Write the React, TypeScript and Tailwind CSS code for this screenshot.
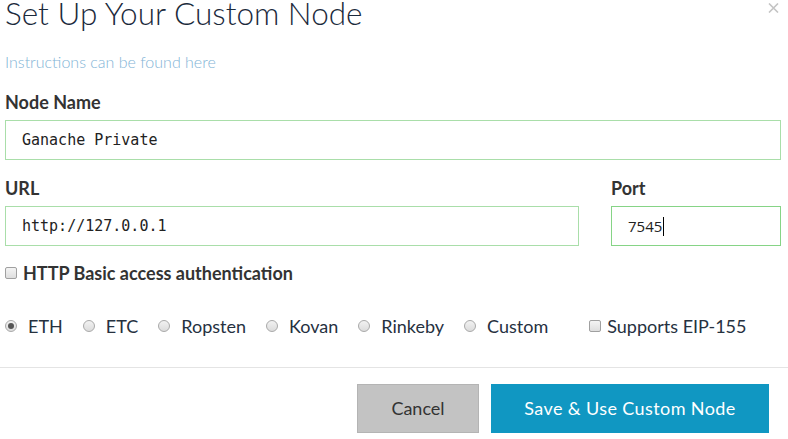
import React from "react";

const lato = { fontFamily: "Lato, 'Open Sans', sans-serif" };

function Radio({ checked }: { checked?: boolean }) {
  return (
    <span className="flex h-[12px] w-[12px] shrink-0 items-center justify-center rounded-full border border-[#a9a9a9] bg-gradient-to-b from-[#f2f2f2] to-[#dcdcdc]">
      {checked && <span className="h-[6px] w-[6px] rounded-full bg-[#555]" />}
    </span>
  );
}

function Checkbox() {
  return (
    <span className="block h-[12px] w-[12px] shrink-0 rounded-[2px] border border-[#a0a0a0] bg-gradient-to-b from-[#f4f4f4] to-[#dedede]" />
  );
}

function Field({ children, className }: { children: React.ReactNode; className?: string }) {
  return (
    <div
      className={
        "flex h-[40px] items-center border border-[#a9dea9] bg-white pl-[16px] text-[15px] text-[#222] " +
        (className || "")
      }
      style={{ fontFamily: "'DejaVu Sans Mono', 'Liberation Mono', monospace" }}
    >
      {children}
    </div>
  );
}

const networks = ["ETH", "ETC", "Ropsten", "Kovan", "Rinkeby", "Custom"];

export default function App() {
  return (
    <div className="h-[439px] w-[788px] overflow-hidden bg-white" style={lato}>
      <div className="pl-[5px] pr-[7px]">
        <div className="flex items-start justify-between">
          <h1 className="font-['Lato_Light',Lato,sans-serif] text-[31.5px] font-light leading-[26px] text-[#1b2a3c]">
            Set Up Your Custom Node
          </h1>
          <svg className="mr-[2px] mt-[3px]" width="11" height="10" viewBox="0 0 11 10">
            <path d="M1 0.5 L10 9.5 M10 0.5 L1 9.5" stroke="#c4c4c4" strokeWidth="1.6" />
          </svg>
        </div>

        <p className="mt-[26px] font-['Lato_Light',Lato,sans-serif] text-[16px] font-light leading-[20px] text-[#82b4d6]">
          Instructions can be found here
        </p>

        <label className="mt-[20px] block text-[18px] font-bold leading-[20px] text-[#333]">Node Name</label>
        <Field className="mt-[8px]">Ganache Private</Field>

        <div className="mt-[18px] flex gap-[32px]">
          <div className="w-[574px]">
            <label className="block text-[18px] font-bold leading-[20px] text-[#333]">URL</label>
            <Field className="mt-[8px]">http://127.0.0.1</Field>
          </div>
          <div className="flex-1">
            <label className="block text-[18px] font-bold leading-[20px] text-[#333]">Port</label>
            <div
              className="mt-[8px] flex h-[40px] items-center border border-[#86d486] bg-white pl-[16px] text-[15px] text-[#222]"
              style={{ fontFamily: "'Open Sans', sans-serif" }}
            >
              <span>7545</span>
              <span className="ml-[1px] h-[19px] w-[1px] bg-black" />
            </div>
          </div>
        </div>

        <div className="mt-[17px] flex items-center gap-[6px] text-[18px] font-bold leading-[20px] text-[#333]">
          <Checkbox />
          <span>HTTP Basic access authentication</span>
        </div>

        <div className="mt-[33px] flex items-center text-[18px] leading-[20px] text-[#26313f]">
          {networks.map((n, i) => (
            <div key={n} className="mr-[20px] flex items-center gap-[11px]">
              <Radio checked={i === 0} />
              <span>{n}</span>
            </div>
          ))}
          <div className="ml-[21px] flex items-center gap-[6px]">
            <Checkbox />
            <span>Supports EIP-155</span>
          </div>
        </div>
      </div>

      <div className="mt-[31px] h-px w-full bg-[#e4e4e4]" />

      <div className="mt-[16px] flex justify-end gap-[12px] pr-[19px]">
        <button className="h-[49px] w-[122px] border border-[#b4b4b4] bg-[#c3c3c3] text-[18px] text-[#333]">
          Cancel
        </button>
        <button className="h-[49px] w-[278px] bg-[#1097c2] text-[18px] tracking-[0.4px] text-white">
          Save &amp; Use Custom Node
        </button>
      </div>
    </div>
  );
}
